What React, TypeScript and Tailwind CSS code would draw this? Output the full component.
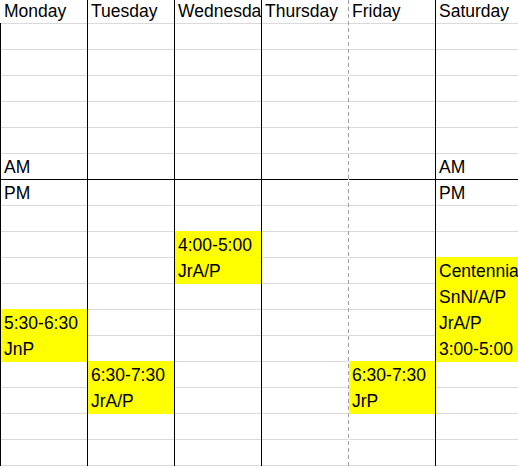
import React from "react";

type Cell = { t?: string; y?: boolean };
type Col = { name: string; line: "solid" | "first" | "dashed"; cells: Record<number, Cell> };

const ROWS = 17;

const cols: Col[] = [
  {
    name: "Monday",
    line: "first",
    cells: {
      6: { t: "AM" },
      7: { t: "PM" },
      12: { t: "5:30-6:30", y: true },
      13: { t: "JnP", y: true },
    },
  },
  {
    name: "Tuesday",
    line: "solid",
    cells: {
      14: { t: "6:30-7:30", y: true },
      15: { t: "JrA/P", y: true },
    },
  },
  {
    name: "Wednesday",
    line: "solid",
    cells: {
      9: { t: "4:00-5:00", y: true },
      10: { t: "JrA/P", y: true },
    },
  },
  { name: "Thursday", line: "solid", cells: {} },
  {
    name: "Friday",
    line: "dashed",
    cells: {
      14: { t: "6:30-7:30", y: true },
      15: { t: "JrP", y: true },
    },
  },
  {
    name: "Saturday",
    line: "solid",
    cells: {
      6: { t: "AM" },
      7: { t: "PM" },
      10: { t: "Centennial", y: true },
      11: { t: "SnN/A/P", y: true },
      12: { t: "JrA/P", y: true },
      13: { t: "3:00-5:00", y: true },
    },
  },
];

function Column({ col }: { col: Col }) {
  const lineCls =
    col.line === "first"
      ? "w-px shrink-0 mt-[23px] bg-black"
      : col.line === "dashed"
      ? "w-px shrink-0 bg-[repeating-linear-gradient(to_bottom,#a3a3a3_0px,#a3a3a3_4px,transparent_4px,transparent_7px)]"
      : "w-px shrink-0 bg-black";
  const rows = Array.from({ length: ROWS }, (_, i) => i + 1);
  const firstYellow = !!col.cells[1]?.y;
  return (
    <div className="flex shrink-0 w-[87px]">
      <div className={lineCls} />
      <div className="flex flex-col w-[86px] shrink-0">
        <div
          className={`h-[24px] border-b ${
            firstYellow ? "border-[#ffff00]" : "border-[#dadada]"
          } flex items-end pl-[3px] pb-[2px] overflow-hidden whitespace-nowrap`}
        >
          <span className="leading-[20px]">{col.name}</span>
        </div>
        {rows.map((r) => {
          const c = col.cells[r];
          const next = col.cells[r + 1];
          const yellow = !!c?.y;
          let border = "border-[#dadada]";
          if (r === 6) border = "border-black";
          else if (yellow || next?.y) border = "border-[#ffff00]";
          return (
            <div
              key={r}
              className={`h-[26px] border-b ${border} ${
                yellow ? "bg-[#ffff00]" : ""
              } flex items-end pl-[3px] pb-[2px] overflow-hidden whitespace-nowrap`}
            >
              {c?.t ? <span className="leading-[20px]">{c.t}</span> : null}
            </div>
          );
        })}
      </div>
    </div>
  );
}

export default function App() {
  return (
    <div className="w-[518px] h-[468px] overflow-hidden bg-white text-black text-[17.5px] font-['Liberation_Sans',Arial,sans-serif]">
      <div className="flex w-[522px]">
        {cols.map((c) => (
          <Column key={c.name} col={c} />
        ))}
      </div>
    </div>
  );
}
